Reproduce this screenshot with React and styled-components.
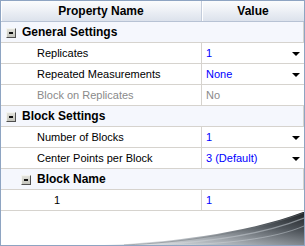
import React from "react";
import styled, { createGlobalStyle } from "styled-components";

const Global = createGlobalStyle`
  html, body { margin: 0; padding: 0; background: #fff; }
  * { box-sizing: border-box; }
`;

const Frame = styled.div`
  width: 305px;
  height: 246px;
  border: 1px solid #8ea4c2;
  display: flex;
  flex-direction: column;
  background: #fff;
  font-family: "Liberation Sans", Arial, sans-serif;
  font-size: 11px;
  color: #000;
  overflow: hidden;
`;

const Header = styled.div`
  display: grid;
  grid-template-columns: 201px 1fr;
  height: 21px;
  flex: none;
  border-bottom: 1px solid #b7c2d4;
  background: linear-gradient(#fbfcfd 0%, #eef1f6 45%, #dce2ec 100%);
`;

const HeaderCell = styled.div`
  display: flex;
  align-items: center;
  justify-content: center;
  font-weight: bold;
  font-size: 12px;
  border-right: ${(p) => (p.$last ? "none" : "1px solid #c3ccdb")};
  box-shadow: inset 1px 0 0 #ffffff;
`;

const Row = styled.div`
  display: grid;
  grid-template-columns: 201px 1fr;
  height: 21px;
  flex: none;
  border-bottom: 1px solid #d6d3ce;
`;

const Label = styled.div`
  display: flex;
  align-items: center;
  padding-left: ${(p) => p.$indent}px;
  border-right: 1px solid #d6d3ce;
  color: ${(p) => (p.$disabled ? "#8a8a8a" : "#000")};
  white-space: nowrap;
  overflow: visible;
`;

const Value = styled.div`
  display: flex;
  align-items: center;
  justify-content: space-between;
  padding: 0 4px 0 4px;
  color: ${(p) => (p.$disabled ? "#8a8a8a" : "#0000ff")};
`;

const Arrow = styled.span`
  width: 0;
  height: 0;
  border-left: 4px solid transparent;
  border-right: 4px solid transparent;
  border-top: 4px solid #000;
  margin-top: 1px;
`;

const GroupRow = styled.div`
  display: flex;
  align-items: center;
  gap: 6px;
  height: 21px;
  flex: none;
  padding-left: ${(p) => p.$indent}px;
  border-bottom: 1px solid #d6d3ce;
  border-right: 1px solid #d6d3ce;
  background: #f5f7fd;
  font-weight: bold;
  font-size: 12px;
`;

const Toggle = styled.span`
  position: relative;
  width: 10px;
  height: 10px;
  flex: none;
  margin-top: 2px;
  border: 1px solid;
  border-color: #f4f4f0 #505050 #505050 #f4f4f0;
  background: linear-gradient(#e2e2dc, #c4c4bc);
  &::after {
    content: "";
    position: absolute;
    left: 2px;
    top: 3px;
    width: 4px;
    height: 2px;
    background: #111;
  }
`;

const Filler = styled.div`
  flex: 1;
  display: flex;
  align-items: flex-end;
  justify-content: flex-end;
`;

const Swoosh = () => (
  <svg width="200" height="33" viewBox="0 0 200 33" style={{ display: "block" }}>
    <defs>
      <linearGradient id="sw" x1="0" y1="1" x2="1" y2="0">
        <stop offset="0" stopColor="#eef0f2" />
        <stop offset="0.35" stopColor="#a9afb5" />
        <stop offset="0.7" stopColor="#4f555b" />
        <stop offset="1" stopColor="#1e2225" />
      </linearGradient>
      <linearGradient id="st" x1="0" y1="0" x2="1" y2="0">
        <stop offset="0" stopColor="#ffffff" stopOpacity="0" />
        <stop offset="0.6" stopColor="#b9bfc5" stopOpacity="0.7" />
        <stop offset="1" stopColor="#8d949a" stopOpacity="0.9" />
      </linearGradient>
    </defs>
    <path d="M0,33 C60,31 140,22 199,0 L200,0 L200,33 Z" fill="url(#sw)" />
    <path d="M40,33 C95,31 155,24 200,6" fill="none" stroke="url(#st)" strokeWidth="1.2" />
    <path d="M70,33 C120,32 170,27 200,14" fill="none" stroke="url(#st)" strokeWidth="1" />
    <path d="M20,33 C80,30.5 145,21 199.5,1" fill="none" stroke="#6b7177" strokeOpacity="0.6" strokeWidth="0.8" />
  </svg>
);

const rows = [
  { type: "group", label: "General Settings", indent: 5 },
  { type: "prop", label: "Replicates", value: "1", drop: true, indent: 36 },
  { type: "prop", label: "Repeated Measurements", value: "None", drop: true, indent: 36 },
  { type: "prop", label: "Block on Replicates", value: "No", disabled: true, indent: 36 },
  { type: "group", label: "Block Settings", indent: 5 },
  { type: "prop", label: "Number of Blocks", value: "1", drop: true, indent: 36 },
  { type: "prop", label: "Center Points per Block", value: "3 (Default)", drop: true, indent: 36 },
  { type: "group", label: "Block Name", indent: 20 },
  { type: "prop", label: "1", value: "1", indent: 53 },
];

export default function App() {
  return (
    <>
      <Global />
      <Frame>
        <Header>
          <HeaderCell>Property Name</HeaderCell>
          <HeaderCell $last>Value</HeaderCell>
        </Header>
        {rows.map((r, i) =>
          r.type === "group" ? (
            <GroupRow key={i} $indent={r.indent}>
              <Toggle />
              {r.label}
            </GroupRow>
          ) : (
            <Row key={i}>
              <Label $indent={r.indent} $disabled={r.disabled}>
                {r.label}
              </Label>
              <Value $disabled={r.disabled}>
                {r.value}
                {r.drop && <Arrow />}
              </Value>
            </Row>
          )
        )}
        <Filler>
          <Swoosh />
        </Filler>
      </Frame>
    </>
  );
}
